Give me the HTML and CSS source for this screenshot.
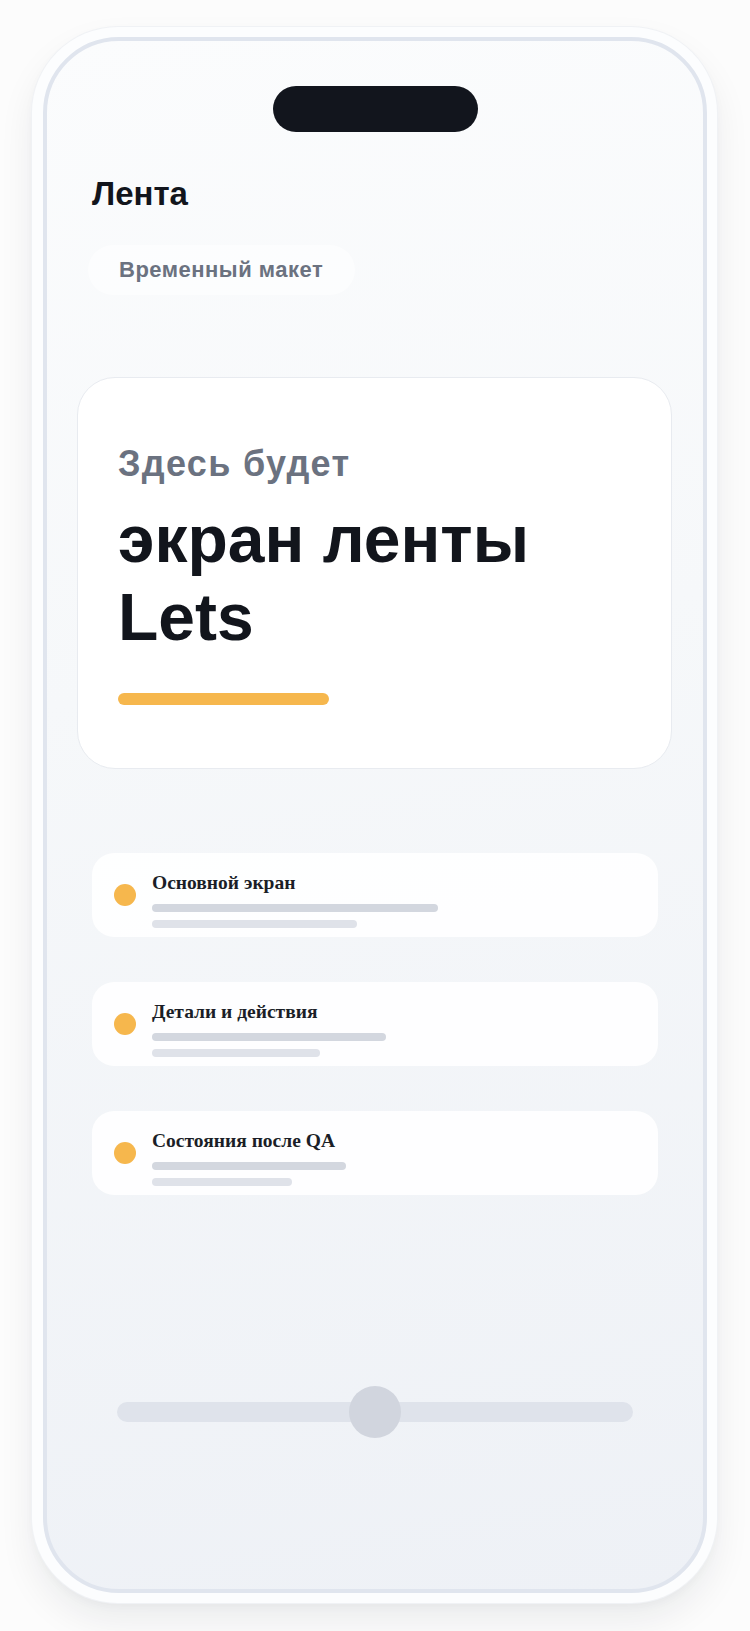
FILE: index.html
```html
<!DOCTYPE html>
<html lang="ru">
<head>
<meta charset="utf-8">
<title>Лента</title>
<link rel="stylesheet" href="styles.css">
</head>
<body>
<div class="page">
  <div class="phone">
    <div class="screen">
      <div class="island"></div>
      <header class="header">
        <h1 class="title">Лента</h1>
        <span class="pill">Временный макет</span>
      </header>
      <section class="hero">
        <p class="hero-sub">Здесь будет</p>
        <h2 class="hero-title">экран ленты<br>Lets</h2>
        <div class="hero-bar"></div>
      </section>
      <ul class="list">
        <li class="item">
          <span class="dot"></span>
          <div class="item-body">
            <div class="item-title">Основной экран</div>
            <div class="line line-a" style="width:286px"></div>
            <div class="line line-b" style="width:205px"></div>
          </div>
        </li>
        <li class="item">
          <span class="dot"></span>
          <div class="item-body">
            <div class="item-title">Детали и действия</div>
            <div class="line line-a" style="width:234px"></div>
            <div class="line line-b" style="width:168px"></div>
          </div>
        </li>
        <li class="item">
          <span class="dot"></span>
          <div class="item-body">
            <div class="item-title">Состояния после QA</div>
            <div class="line line-a" style="width:194px"></div>
            <div class="line line-b" style="width:140px"></div>
          </div>
        </li>
      </ul>
      <div class="slider">
        <div class="track"></div>
        <div class="thumb"></div>
      </div>
    </div>
  </div>
</div>
</body>
</html>
```
FILE: styles.css
```css
* { box-sizing: border-box; }
html, body { margin: 0; padding: 0; }
body {
  background: #fcfcfc;
  font-family: "Liberation Sans", Arial, sans-serif;
  width: 750px;
  height: 1631px;
  overflow: hidden;
}
.page {
  padding: 27px 0 0 32px;
}
.phone {
  width: 685px;
  height: 1576px;
  padding: 10px 10px 10px 11px;
  background: #fcfdfe;
  border-radius: 86px;
  box-shadow: 0 0 0 1px #f0f2f5, 0 18px 36px rgba(20, 24, 40, 0.07), 0 4px 10px rgba(20, 24, 40, 0.03);
}
.screen {
  width: 664px;
  height: 1556px;
  border: 4px solid #e0e5ee;
  border-radius: 76px;
  background: linear-gradient(170deg, #fbfcfd 0%, #f6f8fa 40%, #eef1f6 100%);
  display: flex;
  flex-direction: column;
  overflow: hidden;
}
.island {
  align-self: center;
  width: 205px;
  height: 46px;
  margin-top: 45px;
  border-radius: 23px;
  background: #12151d;
  flex: none;
}
.header {
  padding-left: 41px;
  display: flex;
  flex-direction: column;
  align-items: flex-start;
}
.title {
  margin: 44px 0 0 4px;
  font-size: 33px;
  line-height: 36px;
  font-weight: 700;
  color: #12151c;
}
.pill {
  margin-top: 33px;
  height: 50px;
  padding: 13px 32px 13px 31px;
  border-radius: 25px;
  background: rgba(255, 255, 255, 0.55);
  font-size: 22px;
  line-height: 24px;
  letter-spacing: 0.5px;
  font-weight: 700;
  color: #6b7280;
}
.hero {
  margin: 82px 31px 0 30px;
  padding: 65px 40px 63px 40px;
  background: #ffffff;
  border: 1px solid #e8ebf0;
  border-radius: 38px;
}
.hero-sub {
  margin: 0;
  font-size: 36px;
  line-height: 42px;
  letter-spacing: 1.3px;
  font-weight: 700;
  color: #6b7280;
}
.hero-title {
  margin: 15px 0 0 0;
  font-size: 66px;
  line-height: 78px;
  font-weight: 700;
  color: #12151c;
}
.hero-bar {
  margin-top: 37px;
  width: 211px;
  height: 12px;
  border-radius: 6px;
  background: #f6b74d;
}
.list {
  list-style: none;
  margin: 84px 45px 0 45px;
  padding: 0;
  display: flex;
  flex-direction: column;
  gap: 45px;
}
.item {
  height: 84px;
  padding: 0 22px;
  border-radius: 22px;
  background: rgba(255, 255, 255, 0.9);
  display: flex;
  align-items: center;
  gap: 16px;
}
.dot {
  flex: none;
  width: 22px;
  height: 22px;
  border-radius: 50%;
  background: #f6b74d;
}
.item-body {
  margin-top: 6px;
  display: flex;
  flex-direction: column;
}
.item-title {
  font-family: "Liberation Serif", "Times New Roman", serif;
  font-size: 19.5px;
  line-height: 28px;
  font-weight: 700;
  color: #1b1e27;
}
.line {
  height: 8px;
  border-radius: 4px;
}
.line-a {
  margin-top: 7px;
  background: #d3d7df;
}
.line-b {
  margin-top: 8px;
  background: #dfe2e9;
}
.slider {
  margin: 191px 70px 0 70px;
  display: grid;
  align-items: center;
  justify-items: center;
  height: 52px;
}
.track {
  grid-area: 1 / 1;
  width: 100%;
  height: 20px;
  border-radius: 10px;
  background: #dfe3eb;
}
.thumb {
  grid-area: 1 / 1;
  width: 52px;
  height: 52px;
  border-radius: 50%;
  background: #d1d5de;
}
```
